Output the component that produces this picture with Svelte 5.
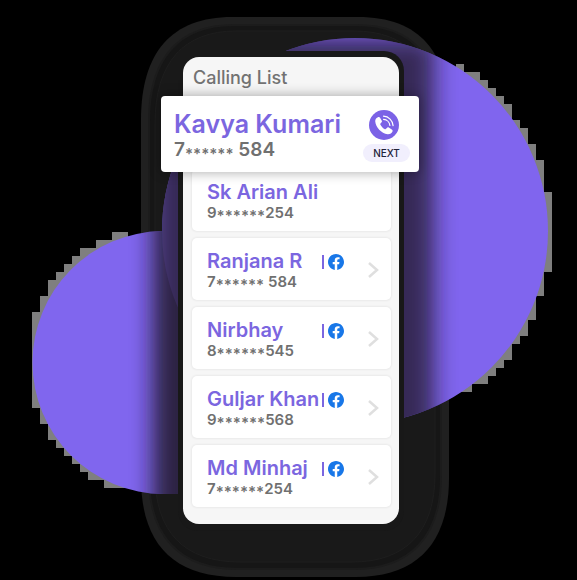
<script>
  const contacts = [
    { name: 'Sk Arian Ali', head: '9', tail: '254' },
    { name: 'Ranjana R', head: '7', tail: ' 584', social: true },
    { name: 'Nirbhay', head: '8', tail: '545', social: true },
    { name: 'Guljar Khan', head: '9', tail: '568', social: true },
    { name: 'Md Minhaj', head: '7', tail: '254', social: true }
  ];

  // Stepped grey fringe: every 8px tile that touches the disc.
  function fringe(cx, cy, r, keep) {
    const tiles = [];
    for (let y = 0; y < 580; y += 8) {
      for (let x = 0; x < 576; x += 8) {
        if (!keep(x)) continue;
        const dx = Math.max(x - cx, 0, cx - x - 8);
        const dy = Math.max(y - cy, 0, cy - y - 8);
        if (Math.hypot(dx, dy) < r - 1) tiles.push({ x, y });
      }
    }
    return tiles;
  }

  const tiles = [
    ...fringe(355, 231, 193, (x) => x >= 416),
    ...fringe(164, 362, 132, (x) => x < 128)
  ].filter((t) => t.x < 128 || (t.x >= 456 && t.y < 392));
</script>

<main class="stage">
  <section class="phone">
    <svg class="backdrop" viewBox="0 0 577 580" width="577" height="580" aria-hidden="true">
      <defs>
        <filter id="soft" x="-20%" y="-20%" width="140%" height="140%">
          <feGaussianBlur stdDeviation="11" />
        </filter>
        <clipPath id="discs">
          <circle cx="355" cy="231" r="193" />
          <path d="M178 231H164a131.500 131.500 0 0 0 0 263h14z" />
        </clipPath>
      </defs>
      <path class="rim" d="M232 17H358C420 17 449 52 449 120V478C449 542 418 577 356 577H236C172 577 141 542 141 478V120C141 52 172 17 232 17Z" />
      <path class="groove" d="M234 25H356C413 25 441 58 441 122V476C441 536 411 569 354 569H238C179 569 149 536 149 476V122C149 58 179 25 234 25Z" />
      <path class="body" d="M236 31H354C408 31 435 62 435 124V474C435 532 406 562 352 562H240C184 562 155 532 155 474V124C155 62 184 31 236 31Z" />
      <g shape-rendering="crispEdges">
        {#each tiles as t}
          <rect x={t.x} y={t.y} width="8" height="8" fill="#7f7f7f" />
        {/each}
      </g>
      <g clip-path="url(#discs)">
        <rect width="577" height="580" fill="#8066ee" />
        <rect x="153" y="39" width="281" height="520" fill="#1a1824" opacity="0.84" filter="url(#soft)" />
        <circle cx="355" cy="231" r="193" fill="#8066ee" opacity="0.12" />
      </g>
      <rect x="178" y="51" width="226" height="480" rx="20" fill="#181818" />
      <path d="M178 51H290V80H178z" fill="#191919" />
    </svg>

    <div class="screen">
      <h1>Calling List</h1>

      <article class="current">
        <div class="who">
          <h2>Kavya Kumari</h2>
          <p>7<span class="stars">******</span>&nbsp;584</p>
        </div>
        <div class="actions">
          <button class="call" aria-label="Call">
            <svg viewBox="0 0 30 30" width="30" height="30" aria-hidden="true">
              <circle cx="15" cy="15" r="15" fill="#7b62e6" />
              <path fill="#fff" d="M9.300 7.100C7.500 7.800 6.200 9.300 6.200 11.200c.5 6.100 6 12 12.500 13 2.300.1 4.200-1 4.900-2.900.2-.6 0-1.100-.5-1.500l-3.300-2.200c-.6-.4-1.100-.3-1.600.1l-1.500 1.400c-.4.3-.8.3-1.200 0-1.800-1.200-3.300-2.700-4.200-4.600-.2-.4-.1-.8.2-1.100l1.100-1.100c.5-.5.5-1 .2-1.600l-1.900-3.100c-.4-.6-.9-.8-1.600-.5z" />
              <g fill="none" stroke="#fff" stroke-linecap="round">
                <path stroke-width="1.200" d="M14.500 6.200c5.200.2 9.200 4.300 9.600 9.400" />
                <path stroke-width="1.200" d="M14.600 9.400c3.400.2 6 2.900 6.300 6.100" />
              </g>
            </svg>
          </button>
          <button class="next">NEXT</button>
        </div>
      </article>

      <ul>
        {#each contacts as c}
          <li>
            <a href="#contact">
              <span class="label">
                <span class="name">{c.name}</span>
                <span class="number">{c.head}<span class="stars">******</span>{c.tail}</span>
              </span>
              {#if c.social}
                <span class="social">
                  <svg viewBox="0 0 24 24" width="16" height="16" role="img" aria-label="Facebook">
                    <circle cx="12" cy="12" r="11" fill="#fff" />
                    <path fill="#1877e8" d="M24 12.073c0-6.627-5.373-12-12-12s-12 5.373-12 12c0 5.990 4.388 10.954 10.125 11.854v-8.385H7.078v-3.470h3.047V9.430c0-3.007 1.792-4.669 4.533-4.669 1.312 0 2.686.235 2.686.235v2.953H15.830c-1.491 0-1.956.925-1.956 1.874v2.250h3.328l-.532 3.470h-2.796v8.385C19.612 23.027 24 18.062 24 12.073z" />
                  </svg>
                </span>
                <svg class="chevron" viewBox="0 0 12 18" width="12" height="18" aria-hidden="true">
                  <path d="M2 2l8 7-8 7" fill="none" stroke="#dfdfdf" stroke-width="2.500" />
                </svg>
              {/if}
            </a>
          </li>
        {/each}
      </ul>
    </div>
  </section>
</main>

<style>
  :global(body) {
    margin: 0;
    background: #000;
  }
  .stage {
    display: flex;
    justify-content: center;
    padding: 17px 0 3px 13px;
    overflow: hidden;
    font-family: Inter, Roboto, 'Liberation Sans', sans-serif;
    font-weight: 600;
  }
  .phone {
    position: relative;
    box-sizing: border-box;
    width: 308px;
    padding: 40px 50px 53px 42px;
  }
  .backdrop {
    position: absolute;
    top: -17px;
    left: -141px;
  }
  .rim { fill: #202020; }
  .groove { fill: #161616; stroke: #1c1c1c; stroke-width: 2; }
  .body { fill: #191919; stroke: #1e1e1e; }
  .screen {
    position: relative;
    padding-bottom: 17px;
    border-radius: 16px;
    background: #f6f6f6;
  }
  h1, h2, p, ul {
    margin: 0;
    padding: 0;
  }
  h1 {
    padding: 9px 10px 6px;
    color: #727272;
    font-size: 18px;
    font-weight: 500;
    line-height: 24px;
  }
  .current {
    position: relative;
    z-index: 1;
    display: flex;
    justify-content: space-between;
    box-sizing: border-box;
    height: 76px;
    margin: 0 -20px 0 -22px;
    padding: 14px 9px 10px 13px;
    border-radius: 4px;
    background: #fff;
    box-shadow: 0 0 12px 1px rgba(0, 0, 0, 0.3);
  }
  h2 {
    color: #7b66e0;
    font-size: 25px;
    font-weight: 600;
    line-height: 28px;
  }
  .current p {
    color: #707070;
    font-size: 19px;
    line-height: 24px;
  }
  .stars {
    font-size: 15px;
    line-height: 1px;
    vertical-align: -3px;
  }
  .actions {
    display: flex;
    flex-direction: column;
    align-items: flex-start;
    gap: 4px;
  }
  button {
    padding: 0;
    border: 0;
    font-family: inherit;
    cursor: pointer;
  }
  .call {
    height: 30px;
    margin-left: 6px;
    border-radius: 50%;
    background: none;
  }
  .call svg { display: block; }
  .next {
    width: 47px;
    height: 18px;
    border-radius: 9px;
    background: #f1effd;
    color: #22223a;
    font-size: 10px;
    font-weight: 500;
  }
  ul {
    display: flex;
    flex-direction: column;
    gap: 7px;
    margin: -3px 8px 0 9px;
    list-style: none;
  }
  a {
    display: flex;
    box-sizing: border-box;
    height: 62px;
    padding: 11px 12px 0 15px;
    border-radius: 5px;
    background: #fff;
    box-shadow: 0 0 2px 1px rgba(0, 0, 0, 0.05);
    text-decoration: none;
  }
  .label {
    display: flex;
    flex-direction: column;
    width: 115px;
    white-space: nowrap;
  }
  .name {
    color: #7b66e0;
    font-size: 20px;
    line-height: 24px;
  }
  .number {
    color: #707070;
    font-size: 15px;
    line-height: 18px;
  }
  .social {
    display: flex;
    align-items: center;
    height: 16px;
    margin-top: 5px;
  }
  .social::before {
    width: 2px;
    height: 14px;
    margin-right: 4px;
    background: #7b66e0;
    content: '';
  }
  .chevron {
    margin: 12px 0 0 auto;
  }
</style>
